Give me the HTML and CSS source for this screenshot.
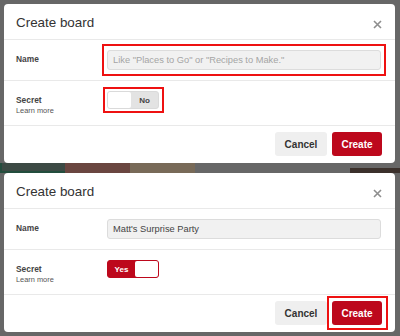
FILE: index.html
```html
<!DOCTYPE HTML>
<html>
<head>
	<title>Create board</title>
	<meta http-equiv="Content-Type" content="text/html; charset=UTF-8">
	<meta name='viewport' content="width=device-width,initial-scale=1">
	<link rel="stylesheet" href="styles.css">
</head>
<body>

	<div class='dialog'>
		<div class='header'>
			<span class='title'>Create board</span>
			<span class='close'>
				<svg width="9" height="9" viewBox="0 0 9 9"><path d="M1 1L8 8M8 1L1 8" stroke="#8e8e8e" stroke-width="1.6" fill="none"/></svg>
			</span>
		</div>
		<div class='row name'>
			<div class='label'><b>Name</b></div>
			<div class='field'>
				<div class='input placeholder marked'>Like "Places to Go" or "Recipes to Make."</div>
			</div>
		</div>
		<div class='row secret'>
			<div class='label'>
				<b>Secret</b>
				<span class='more'>Learn more</span>
			</div>
			<div class='field'>
				<div class='toggle off marked-small'>
					<span class='knob'></span>
					<span class='state'>No</span>
				</div>
			</div>
		</div>
		<div class='footer'>
			<span class='button cancel'>Cancel</span>
			<span class='button create'>Create</span>
		</div>
	</div>

	<div class='strip'>
		<span class='tile green'></span>
		<span class='tile red'></span>
		<span class='tile tan'></span>
		<span class='tile gap'></span>
		<span class='tile brown'></span>
	</div>

	<div class='dialog'>
		<div class='header'>
			<span class='title'>Create board</span>
			<span class='close'>
				<svg width="9" height="9" viewBox="0 0 9 9"><path d="M1 1L8 8M8 1L1 8" stroke="#8e8e8e" stroke-width="1.6" fill="none"/></svg>
			</span>
		</div>
		<div class='row name'>
			<div class='label'><b>Name</b></div>
			<div class='field'>
				<div class='input'>Matt's Surprise Party</div>
			</div>
		</div>
		<div class='row secret'>
			<div class='label'>
				<b>Secret</b>
				<span class='more'>Learn more</span>
			</div>
			<div class='field'>
				<div class='toggle on'>
					<span class='state'>Yes</span>
					<span class='knob'></span>
				</div>
			</div>
		</div>
		<div class='footer'>
			<span class='button cancel'>Cancel</span>
			<span class='button create marked-small'>Create</span>
		</div>
	</div>

</body>
</html>
```
FILE: styles.css
```css
body {
	margin: 0;
	padding: 4px 5px 0 4px;
	background-color: #676767;
	font-family: "Liberation Sans", Arial, sans-serif;
	color: #333333;
}

div.dialog {
	background-color: white;
	border-radius: 4px;
}

div.header {
	height: 35px;
	display: flex;
	align-items: center;
	justify-content: space-between;
	padding: 0 13px 0 12px;
	border-bottom: 1px solid #e9e9e9;
}

.title {
	font-size: 13.4px;
	color: #333333;
	margin-top: 2px;
}

.close {
	display: flex;
	margin-top: 5px;
}

div.row {
	display: flex;
	box-sizing: border-box;
	padding: 10px 14px 0 12px;
	border-bottom: 1px solid #e9e9e9;
}

div.row.name {
	height: 41px;
}

div.row.secret {
	height: 45px;
}

div.label {
	width: 91px;
	flex: none;
	display: flex;
	flex-direction: column;
	font-size: 8.4px;
	color: #444444;
	padding-top: 4px;
}

.more {
	font-size: 7.4px;
	color: #555555;
	margin-top: 1px;
}

div.field {
	flex: 1;
}

div.input {
	height: 20px;
	box-sizing: border-box;
	border: 1px solid #dcdcdc;
	border-radius: 3px;
	background-color: #f1f1f1;
	font-size: 9.3px;
	color: #444444;
	padding: 0 5px;
	display: flex;
	align-items: center;
}

div.input.placeholder {
	color: #a5a5a5;
}

/* red annotation boxes drawn over the controls */
.marked, .marked-small {
	position: relative;
}

.marked::after, .marked-small::after {
	content: "";
	position: absolute;
	border: 2px solid #ee1111;
}

.marked::after {
	top: -7px;
	bottom: -7px;
	left: -6px;
	right: -6px;
}

.marked-small::after {
	top: -5px;
	bottom: -5px;
	left: -5px;
	right: -6px;
}

div.toggle {
	width: 52px;
	height: 18px;
	box-sizing: border-box;
	border-radius: 3px;
	display: flex;
	align-items: stretch;
	font-size: 8px;
	font-weight: bold;
}

div.toggle.off {
	background-color: #e3e3e3;
	border: 1px solid #dadada;
	color: #444444;
}

div.toggle.on {
	background-color: #bd081c;
	border: 1px solid #bd081c;
	color: white;
}

.knob {
	width: 23px;
	background-color: white;
	border-radius: 2px;
}

.state {
	flex: 1;
	display: flex;
	align-items: center;
	justify-content: center;
}

div.footer {
	height: 37px;
	box-sizing: border-box;
	display: flex;
	justify-content: flex-end;
	align-items: flex-start;
	gap: 5px;
	padding: 6px 13px 0 0;
}

.button {
	height: 24px;
	display: flex;
	align-items: center;
	justify-content: center;
	border-radius: 3px;
	font-size: 10px;
	font-weight: bold;
}

.button.cancel {
	width: 52px;
	background-color: #efefef;
	color: #333333;
}

.button.create {
	width: 50px;
	background-color: #bd081c;
	color: white;
}

div.strip {
	height: 10px;
	margin: 0 -5px 0 -4px;
	display: flex;
}

.tile {
	height: 10px;
}

.tile.green {
	width: 65px;
	background-color: #3c4a44;
	box-shadow: inset 2px 0 0 #234d3d, inset 0 -2px 0 #234d3d;
}

.tile.red {
	width: 65px;
	background-color: #6a4640;
}

.tile.tan {
	width: 65px;
	background-color: #786a58;
}

.tile.gap {
	flex: 1;
}

.tile.brown {
	width: 50px;
	background: linear-gradient(to bottom, #676767 0, #676767 5px, #3b302b 5px);
}
```
